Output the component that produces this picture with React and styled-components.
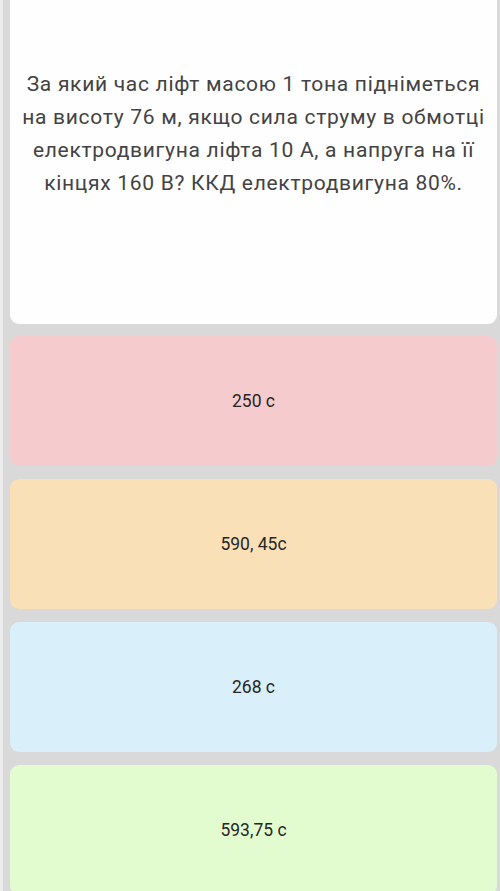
import React from "react";
import styled, { createGlobalStyle } from "styled-components";

const Global = createGlobalStyle`
  html, body { margin: 0; padding: 0; background: #d9d9d9; }
  body { font-family: Roboto, "Noto Sans", Arial, sans-serif; }
`;

const Page = styled.div`
  min-height: 891px;
  box-sizing: border-box;
  background: #d9d9d9;
  border-left: 3px solid #ececec;
  padding: 0 3px 0 7px;
  display: flex;
  flex-direction: column;
  gap: 12px;
  overflow: hidden;
`;

const QuestionCard = styled.div`
  background: #fefefe;
  border-radius: 0 0 9px 9px;
  height: 324px;
  box-sizing: border-box;
  padding: 68px 0 0;
  text-align: center;
  color: #434343;
  font-size: 21px;
  line-height: 33px;
  letter-spacing: 0.7px;
  white-space: nowrap;
`;

const Answers = styled.div`
  display: flex;
  flex-direction: column;
  gap: 13px;
`;

const Answer = styled.div`
  height: 130px;
  border-radius: 9px;
  background: ${(p) => p.$bg};
  display: flex;
  align-items: center;
  justify-content: center;
  color: #262626;
  font-size: 17.5px;
`;

const answers = [
  { text: "250 с", bg: "#f6cbcd" },
  { text: "590, 45с", bg: "#f9e0b6" },
  { text: "268 с", bg: "#d9f0fa" },
  { text: "593,75 с", bg: "#e2fcd0" },
];

export default function App() {
  return (
    <>
      <Global />
      <Page>
        <QuestionCard>
          За який час ліфт масою 1 тона підніметься
          <br />
          на висоту 76 м, якщо сила струму в обмотці
          <br />
          електродвигуна ліфта 10 А, а напруга на її
          <br />
          кінцях 160 В? ККД електродвигуна 80%.
        </QuestionCard>
        <Answers>
          {answers.map((a) => (
            <Answer key={a.text} $bg={a.bg}>
              {a.text}
            </Answer>
          ))}
        </Answers>
      </Page>
    </>
  );
}
